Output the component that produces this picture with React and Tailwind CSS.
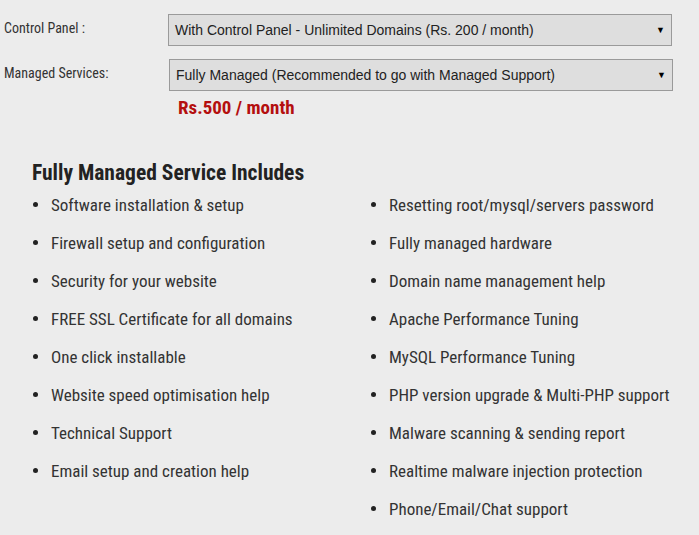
import React from "react";

const leftItems = [
  "Software installation & setup",
  "Firewall setup and configuration",
  "Security for your website",
  "FREE SSL Certificate for all domains",
  "One click installable",
  "Website speed optimisation help",
  "Technical Support",
  "Email setup and creation help",
];

const rightItems = [
  "Resetting root/mysql/servers password",
  "Fully managed hardware",
  "Domain name management help",
  "Apache Performance Tuning",
  "MySQL Performance Tuning",
  "PHP version upgrade & Multi-PHP support",
  "Malware scanning & sending report",
  "Realtime malware injection protection",
  "Phone/Email/Chat support",
];

function FakeSelect({ text, className }) {
  return (
    <div
      className={`flex h-[32px] items-center justify-between border border-[#9a9a9a] bg-[#dedede] pl-[6px] pr-[6px] text-[14px] text-[#222] ${className}`}
      style={{ fontFamily: '"Liberation Sans", Arial, sans-serif' }}
    >
      <span>{text}</span>
      <span className="text-[9px] leading-none text-black">▼</span>
    </div>
  );
}

function Bullets({ items }) {
  return (
    <ul className="flex flex-col">
      {items.map((item) => (
        <li key={item} className="flex h-[38px] items-start">
          <span className="mt-[8px] mr-[13px] h-[5px] w-[5px] shrink-0 rounded-full bg-[#222]" />
          <span className="text-[17px] leading-[22px] text-[#333]">{item}</span>
        </li>
      ))}
    </ul>
  );
}

export default function App() {
  return (
    <div className="h-[535px] w-[699px] overflow-hidden bg-[#ececec] font-stretch-condensed font-['Roboto',sans-serif]">
      <div className="flex pt-[14px]">
        <div className="w-[168px] pl-[4px] pt-[4px] text-[14px] text-[#333]">Control Panel :</div>
        <FakeSelect text="With Control Panel - Unlimited Domains (Rs. 200 / month)" className="w-[504px]" />
      </div>
      <div className="mt-[13px] flex">
        <div className="w-[169px] pl-[4px] pt-[4px] text-[14px] text-[#333]">Managed Services:</div>
        <FakeSelect text="Fully Managed (Recommended to go with Managed Support)" className="w-[504px]" />
      </div>
      <div className="ml-[178px] mt-[5px] text-[19px] font-bold leading-[24px] text-[#b40f0f]">
        Rs.500 / month
      </div>

      <h2 className="ml-[32px] mt-[39px] text-[21.5px] font-bold leading-[28px] text-[#222]">
        Fully Managed Service Includes
      </h2>
      <div className="mt-[7px] flex">
        <div className="w-[371px] pl-[33px]">
          <Bullets items={leftItems} />
        </div>
        <div>
          <Bullets items={rightItems} />
        </div>
      </div>
    </div>
  );
}
